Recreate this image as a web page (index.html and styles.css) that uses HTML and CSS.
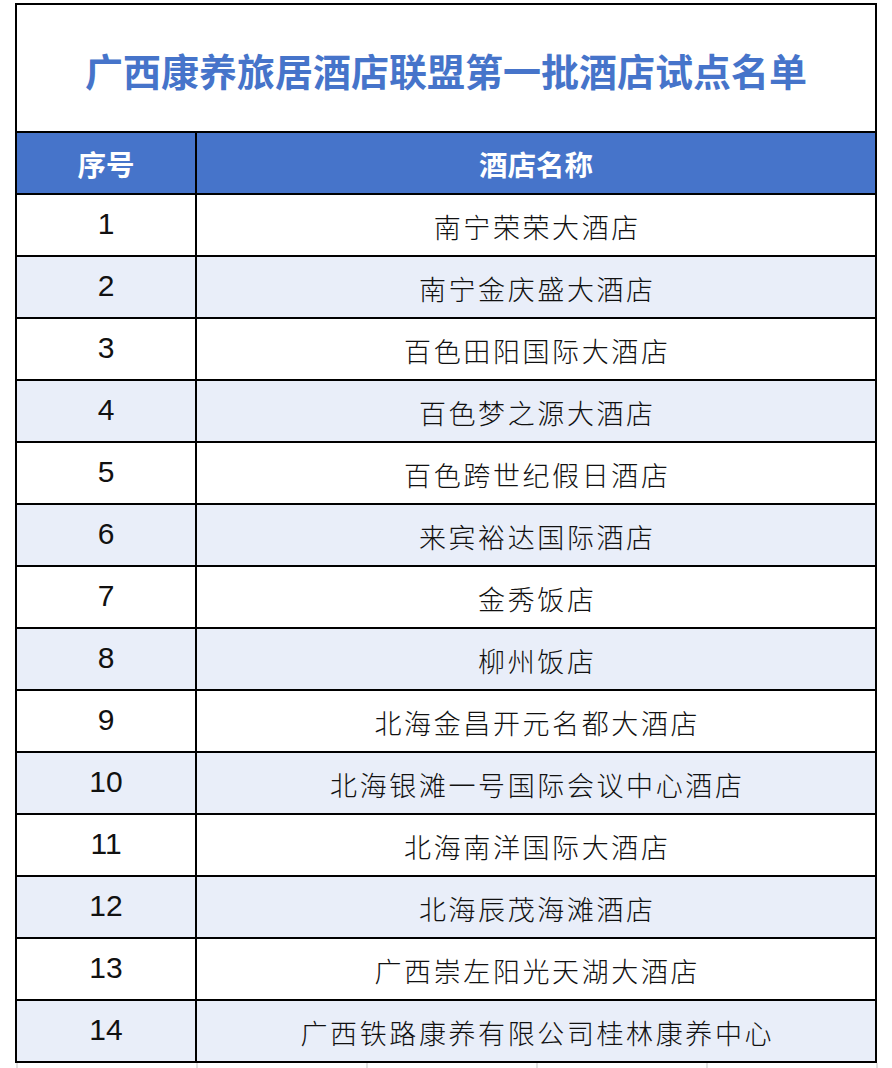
FILE: index.html
```html
<!DOCTYPE html>
<html lang="zh-CN">
<head>
<meta charset="utf-8">
<title>广西康养旅居酒店联盟第一批酒店试点名单</title>
<link rel="stylesheet" href="styles.css">
</head>
<body>
<div class="sheet">
  <div class="title">广西康养旅居酒店联盟第一批酒店试点名单</div>
  <div class="row head"><div class="num">序号</div><div class="name">酒店名称</div></div>
  <div class="row"><div class="num">1</div><div class="name">南宁荣荣大酒店</div></div>
  <div class="row alt"><div class="num">2</div><div class="name">南宁金庆盛大酒店</div></div>
  <div class="row"><div class="num">3</div><div class="name">百色田阳国际大酒店</div></div>
  <div class="row alt"><div class="num">4</div><div class="name">百色梦之源大酒店</div></div>
  <div class="row"><div class="num">5</div><div class="name">百色跨世纪假日酒店</div></div>
  <div class="row alt"><div class="num">6</div><div class="name">来宾裕达国际酒店</div></div>
  <div class="row"><div class="num">7</div><div class="name">金秀饭店</div></div>
  <div class="row alt"><div class="num">8</div><div class="name">柳州饭店</div></div>
  <div class="row"><div class="num">9</div><div class="name">北海金昌开元名都大酒店</div></div>
  <div class="row alt"><div class="num">10</div><div class="name">北海银滩一号国际会议中心酒店</div></div>
  <div class="row"><div class="num">11</div><div class="name">北海南洋国际大酒店</div></div>
  <div class="row alt"><div class="num">12</div><div class="name">北海辰茂海滩酒店</div></div>
  <div class="row"><div class="num">13</div><div class="name">广西崇左阳光天湖大酒店</div></div>
  <div class="row alt last"><div class="num">14</div><div class="name">广西铁路康养有限公司桂林康养中心</div></div>
</div>
<div class="gridfoot">
  <span class="gcell w180"></span><span class="gcell"></span><span class="gcell"></span><span class="gcell"></span><span class="gcell"></span><span class="gcell end"></span>
</div>
</body>
</html>
```
FILE: styles.css
```css
html, body {
  margin: 0;
  padding: 0;
  background: #ffffff;
}
body {
  font-family: "Noto Sans CJK SC", "Liberation Sans", sans-serif;
}
.sheet {
  margin: 3px 0 0 15px;
  width: 862px;
  box-sizing: border-box;
  border: 2px solid #000;
}
.title {
  height: 128px;
  box-sizing: border-box;
  border-bottom: 2px solid #000;
  display: flex;
  align-items: center;
  justify-content: center;
  color: #4674CA;
  font-size: 38px;
  font-weight: 700;
  padding-top: 2px;
}
.row {
  display: grid;
  grid-template-columns: 180px 1fr;
  height: 62px;
  box-sizing: border-box;
  border-bottom: 2px solid #000;
  background: #ffffff;
}
.row.alt {
  background: #E9EEF9;
}
.row.last {
  border-bottom: none;
  height: 60px;
}
.num {
  border-right: 2px solid #000;
  display: flex;
  align-items: center;
  justify-content: center;
  font-family: "Liberation Sans", sans-serif;
  font-size: 30px;
  color: #111;
  padding-bottom: 2px;
}
.name {
  display: flex;
  align-items: center;
  justify-content: center;
  font-family: "Noto Sans CJK SC", sans-serif;
  font-weight: 300;
  font-size: 27px;
  letter-spacing: 2.6px;
  padding-left: 2.6px;
  color: #111;
  padding-top: 3px;
}
.row.head {
  background: #4674CA;
}
.row.head .num,
.row.head .name {
  font-family: "Noto Sans CJK SC", sans-serif;
  font-weight: 700;
  font-size: 28.5px;
  letter-spacing: 0;
  padding: 0;
  color: #ffffff;
}
.gridfoot {
  display: flex;
  margin-left: 16px;
  height: 6px;
}
.gcell {
  display: block;
  width: 170px;
  height: 6px;
  border-left: 2px solid #e2e2e2;
  box-sizing: border-box;
}
.gcell.w180 {
  width: 180px;
}
.gcell.end {
  width: 2px;
}
```
